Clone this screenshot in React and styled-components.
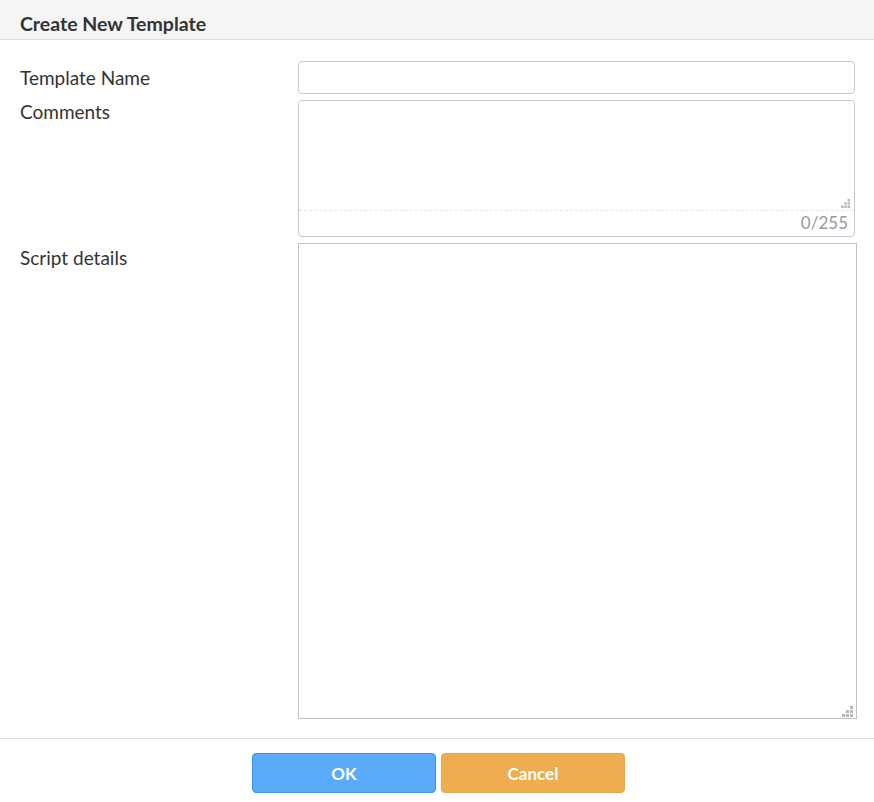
import React, { useState } from 'react';
import styled, { createGlobalStyle } from 'styled-components';

const GlobalStyle = createGlobalStyle`
    html, body {
        margin: 0;
        padding: 0;
        background: #fff;
    }
    body {
        font-family: 'Lato', 'Open Sans', Arial, sans-serif;
        color: #333;
    }
    * {
        box-sizing: border-box;
    }
`;

const Dialog = styled.div`
    width: 874px;
    height: 802px;
    display: flex;
    flex-direction: column;
    background: #fff;
`;

const Header = styled.div`
    height: 40px;
    padding: 11px 20px 0;
    background: #f5f5f5;
    border-bottom: 1px solid #dcdcdc;
`;

const Title = styled.h1`
    margin: 0;
    font-size: 19.5px;
    line-height: 26px;
    font-weight: 700;
    color: #333;
`;

const Body = styled.div`
    padding: 21px 17px 19px 20px;
    display: flex;
    flex-direction: column;
    gap: 6px;
`;

const Row = styled.div`
    display: grid;
    grid-template-columns: 278px 1fr;
    align-items: ${props => props.center ? 'center' : 'start'};
`;

const Label = styled.label`
    font-size: 19px;
    line-height: 24px;
    color: #333;
    padding-top: ${props => props.offset || 0}px;
`;

const TextInput = styled.input`
    width: 557px;
    height: 33px;
    border: 1px solid #c4c7cc;
    border-radius: 4px;
    padding: 0 10px;
    font: inherit;
    font-size: 17px;
    outline: none;
`;

const CommentBox = styled.div`
    position: relative;
    width: 557px;
    height: 137px;
    border: 1px solid #c4c7cc;
    border-radius: 4px;
    display: flex;
    flex-direction: column;
    overflow: hidden;
`;

const CommentArea = styled.textarea`
    height: 110px;
    border: none;
    border-bottom: 1px dashed #e6e6e6;
    resize: none;
    outline: none;
    padding: 6px 10px;
    font: inherit;
    font-size: 17px;
`;

const Counter = styled.div`
    height: 25px;
    padding: 0 6px 0 0;
    text-align: right;
    font-size: 17px;
    line-height: 24px;
    color: #999;
`;

const ScriptBox = styled.div`
    position: relative;
    width: 559px;
    height: 476px;
`;

const ScriptArea = styled.textarea`
    display: block;
    width: 100%;
    height: 100%;
    border: 1px solid #c2c2c2;
    border-radius: 0;
    resize: none;
    outline: none;
    padding: 6px 10px;
    font: inherit;
    font-size: 17px;
`;

const Grip = styled.svg`
    position: absolute;
    right: ${props => props.right}px;
    bottom: ${props => props.bottom}px;
    pointer-events: none;
`;

const Footer = styled.div`
    border-top: 1px solid #dcdcdc;
    padding-top: 14px;
    display: flex;
    justify-content: center;
    gap: 5px;
    padding-left: 3px;
`;

const Button = styled.button`
    width: 184px;
    height: 40px;
    border-radius: 4px;
    border: 1px solid ${props => props.variant === 'cancel' ? '#eaa64a' : '#3f93ec'};
    background: ${props => props.variant === 'cancel' ? '#efad4f' : '#5aabfb'};
    color: #fff;
    font-family: inherit;
    font-size: 17px;
    font-weight: 700;
    cursor: pointer;
`;

const ResizeGrip = ({ right, bottom, size = 11 }) => {
    const dots = [[2, 0], [1, 1], [2, 1], [0, 2], [1, 2], [2, 2]];
    return (
        <Grip right={right} bottom={bottom} width={size} height={size} viewBox='0 0 11 11'>
            {dots.map(([x, y]) => (
                <rect key={`${x}-${y}`} x={x * 4} y={y * 4} width='3' height='3' fill='#b8b8b8' />
            ))}
        </Grip>
    );
};

const App = () => {
    const [name, setName] = useState('');
    const [comments, setComments] = useState('');
    const [script, setScript] = useState('');

    return (
        <Dialog>
            <GlobalStyle />
            <Header>
                <Title>Create New Template</Title>
            </Header>
            <Body>
                <Row center>
                    <Label>Template Name</Label>
                    <TextInput value={name} onChange={e => setName(e.target.value)} />
                </Row>
                <Row>
                    <Label>Comments</Label>
                    <CommentBox>
                        <CommentArea
                            maxLength={255}
                            value={comments}
                            onChange={e => setComments(e.target.value)}
                        />
                        <Counter>{comments.length}/255</Counter>
                        <ResizeGrip right={4} bottom={28} size={9} />
                    </CommentBox>
                </Row>
                <Row>
                    <Label offset={3}>Script details</Label>
                    <ScriptBox>
                        <ScriptArea value={script} onChange={e => setScript(e.target.value)} />
                        <ResizeGrip right={4} bottom={2} />
                    </ScriptBox>
                </Row>
            </Body>
            <Footer>
                <Button>OK</Button>
                <Button variant='cancel'>Cancel</Button>
            </Footer>
        </Dialog>
    );
};

export default App;
